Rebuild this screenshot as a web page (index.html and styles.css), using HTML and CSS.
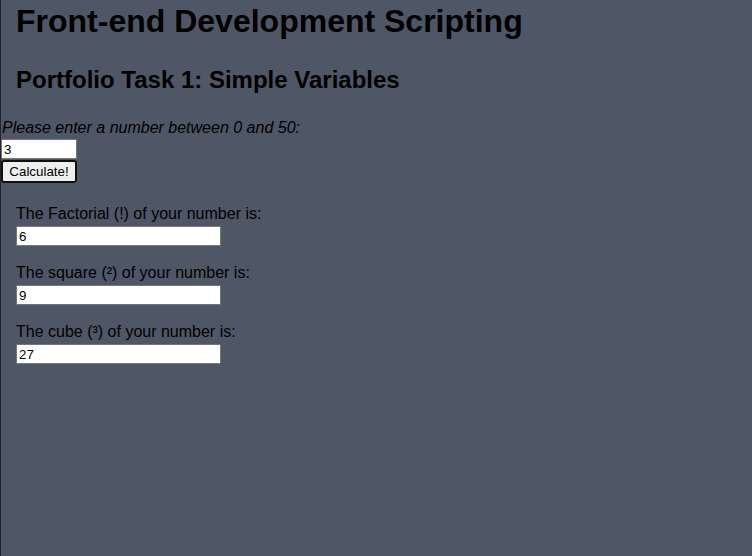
FILE: index.html
```html
<!DOCTYPE html>
<html>
<head>
<meta charset="utf-8">
<link rel="stylesheet" href="styles.css">
</head>
<body>
<div class="page">
  <header class="head">
    <h1 class="title">Front-end Development Scripting</h1>
    <h2 class="subtitle">Portfolio Task 1: Simple Variables</h2>
  </header>
  <form class="entry">
    <p class="prompt">Please enter a number between 0 and 50:</p>
    <input class="num" type="text" value="3">
    <button class="calc" type="button">Calculate!</button>
  </form>
  <section class="results">
    <div class="result">
      <span class="label">The Factorial (!) of your number is:</span>
      <input class="out" type="text" value="6">
    </div>
    <div class="result">
      <span class="label">The square (²) of your number is:</span>
      <input class="out" type="text" value="9">
    </div>
    <div class="result">
      <span class="label">The cube (³) of your number is:</span>
      <input class="out" type="text" value="27">
    </div>
  </section>
</div>
</body>
</html>
```
FILE: styles.css
```css
html, body {
  margin: 0;
  padding: 0;
  height: 100%;
}
body {
  background: #4f5666;
  font-family: "Liberation Sans", Arial, sans-serif;
  color: #000;
}
.page {
  min-height: 100%;
  box-sizing: border-box;
  border-left: 1px solid #2a1f2c;
}
.head {
  padding-left: 15px;
}
.title {
  margin: 0;
  padding-top: 3px;
  font-size: 32px;
  font-weight: bold;
  line-height: 37px;
}
.subtitle {
  margin: 26px 0 0;
  font-size: 24px;
  font-weight: bold;
  line-height: 28px;
}
.entry {
  display: flex;
  flex-direction: column;
  align-items: flex-start;
  margin-top: 24px;
}
.prompt {
  margin: 0 0 2px;
  padding-left: 1px;
  font-style: italic;
  font-size: 16px;
  line-height: 19px;
}
.num {
  width: 76px;
  height: 20px;
  box-sizing: border-box;
  margin: 0;
  padding: 1px 2px;
  border: 1px solid #767676;
  background: #fff;
  font-family: "Liberation Sans", Arial, sans-serif;
  font-size: 13.33px;
  color: #000;
}
.calc {
  width: 76px;
  height: 23px;
  margin: 1px 0 0;
  padding: 0;
  box-sizing: border-box;
  border: 1px solid #767676;
  outline: 2px solid #101010;
  outline-offset: -2px;
  border-radius: 3px;
  background: #efefef;
  font-family: "Liberation Sans", Arial, sans-serif;
  font-size: 13.33px;
  color: #000;
}
.results {
  display: flex;
  flex-direction: column;
  gap: 18px;
  padding: 22px 0 0 15px;
}
.result {
  display: flex;
  flex-direction: column;
  align-items: flex-start;
  gap: 3px;
}
.label {
  font-size: 16px;
  line-height: 18px;
}
.out {
  width: 205px;
  height: 20px;
  box-sizing: border-box;
  margin: 0;
  padding: 1px 2px;
  border: 1px solid #767676;
  background: #fff;
  font-family: "Liberation Sans", Arial, sans-serif;
  font-size: 13.33px;
  color: #000;
}
```
